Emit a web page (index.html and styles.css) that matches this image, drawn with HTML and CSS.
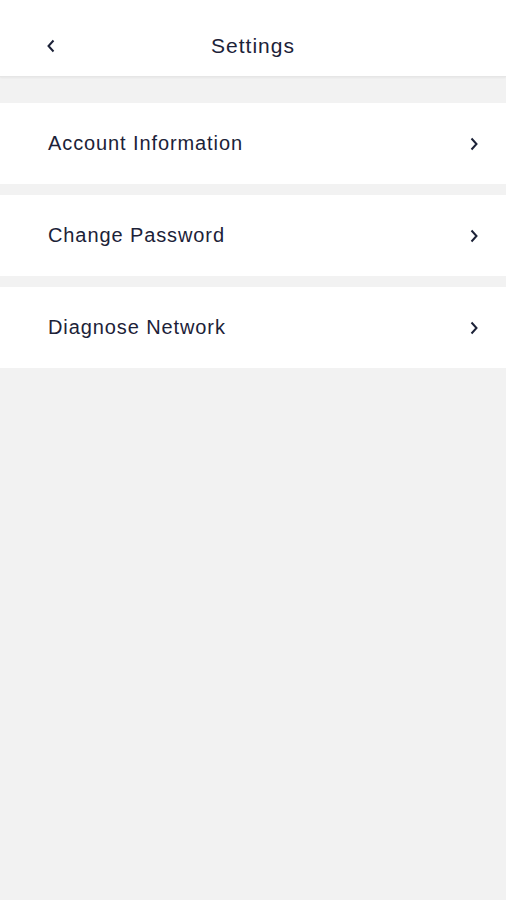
FILE: index.html
```html
<!DOCTYPE html>
<html>
    <head>
        <meta charset="UTF-8">
        <title>Settings</title>
        <link rel="stylesheet" href="styles.css">
    </head>
    <body>
        <div class="header">
            <span class="back">
                <svg width="10" height="14" viewBox="0 0 10 14"><path d="M7.5 1.5 L2.5 7 L7.5 12.5" fill="none" stroke="#1c2238" stroke-width="2"/></svg>
            </span>
            <h1 class="title">Settings</h1>
        </div>
        <div class="list">
            <div class="row">
                <span>Account Information</span>
                <svg width="10" height="14" viewBox="0 0 10 14"><path d="M2.5 1.5 L7.5 7 L2.5 12.5" fill="none" stroke="#1c2238" stroke-width="2"/></svg>
            </div>
            <div class="row">
                <span>Change Password</span>
                <svg width="10" height="14" viewBox="0 0 10 14"><path d="M2.5 1.5 L7.5 7 L2.5 12.5" fill="none" stroke="#1c2238" stroke-width="2"/></svg>
            </div>
            <div class="row">
                <span>Diagnose Network</span>
                <svg width="10" height="14" viewBox="0 0 10 14"><path d="M2.5 1.5 L7.5 7 L2.5 12.5" fill="none" stroke="#1c2238" stroke-width="2"/></svg>
            </div>
        </div>
    </body>
</html>
```

FILE: styles.css
```css
html, body {
    margin: 0;
    background-color: #f2f2f2;
    font-family: "Liberation Sans", Arial, sans-serif;
    color: #1c2238;
}
.header {
    position: relative;
    height: 77px;
    box-sizing: border-box;
    padding-top: 16px;
    background-color: white;
    border-bottom: 1px solid #e6e6e6;
    box-shadow: 0 1px 2px rgba(0, 0, 0, 0.05);
    display: flex;
    align-items: center;
    justify-content: center;
}
.back {
    position: absolute;
    left: 46px;
    top: 39px;
}
.title {
    margin: 0;
    font-size: 21px;
    letter-spacing: 1px;
    font-weight: normal;
}
.list {
    padding-top: 26px;
}
.row {
    height: 81px;
    background-color: white;
    margin-bottom: 11px;
    display: flex;
    align-items: center;
    justify-content: space-between;
    padding: 0 27px 0 48px;
    font-size: 20px;
    letter-spacing: 0.9px;
}
```
